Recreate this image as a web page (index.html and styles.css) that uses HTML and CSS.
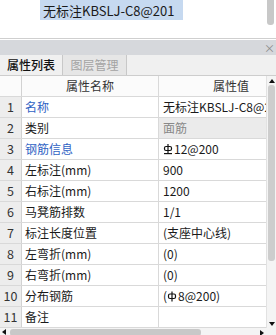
FILE: index.html
```html
<!DOCTYPE html>
<html>
<head>
<meta charset="utf-8">
<link rel="stylesheet" href="styles.css">
</head>
<body>
<div class="top">
  <div class="sel">无标注KBSLJ-C8@201</div>
  <div class="top-thumb"></div>
</div>
<div class="titlebar"><span class="close">×</span></div>
<div class="tabs">
  <div class="tab active">属性列表</div>
  <div class="tab">图层管理</div>
</div>
<div class="grid-wrap">
  <div class="grid">
    <div class="row head"><div class="num"></div><div class="name c">属性名称</div><div class="val c">属性值</div></div>
    <div class="row"><div class="num">1</div><div class="name blue">名称</div><div class="val">无标注KBSLJ-C8@201</div></div>
    <div class="row"><div class="num">2</div><div class="name">类别</div><div class="val ro">面筋</div></div>
    <div class="row"><div class="num">3</div><div class="name blue">钢筋信息</div><div class="val"><svg class="bar3" width="10" height="11" viewBox="0 0 10 11"><rect x="1.5" y="2.5" width="7" height="4" rx="1.5" fill="none" stroke="#111" stroke-width="1.2"/><line x1="5" y1="0" x2="5" y2="9" stroke="#111" stroke-width="1.2"/><line x1="1" y1="9.6" x2="9" y2="9.6" stroke="#111" stroke-width="1.2"/></svg>12@200</div></div>
    <div class="row"><div class="num">4</div><div class="name">左标注(mm)</div><div class="val">900</div></div>
    <div class="row"><div class="num">5</div><div class="name">右标注(mm)</div><div class="val">1200</div></div>
    <div class="row"><div class="num">6</div><div class="name">马凳筋排数</div><div class="val">1/1</div></div>
    <div class="row"><div class="num">7</div><div class="name">标注长度位置</div><div class="val">(支座中心线)</div></div>
    <div class="row"><div class="num">8</div><div class="name">左弯折(mm)</div><div class="val">(0)</div></div>
    <div class="row"><div class="num">9</div><div class="name">右弯折(mm)</div><div class="val">(0)</div></div>
    <div class="row"><div class="num">10</div><div class="name">分布钢筋</div><div class="val">(<svg class="bar1" width="10" height="11" viewBox="0 0 10 11"><rect x="1.5" y="3" width="7" height="4.5" rx="1.5" fill="none" stroke="#111" stroke-width="1.2"/><line x1="5" y1="0.5" x2="5" y2="10.5" stroke="#111" stroke-width="1.2"/></svg>8@200)</div></div>
    <div class="row"><div class="num">11</div><div class="name">备注</div><div class="val"></div></div>
  </div>
  <div class="vscroll">
    <span class="up"></span>
    <span class="vthumb"></span>
  </div>
</div>
<div class="hscroll">
  <span class="left"></span>
  <span class="hthumb"></span>
  <span class="right"></span>
  <span class="down"></span>
</div>
</body>
</html>
```

FILE: styles.css
```css
* { box-sizing: border-box; }
html, body {
  margin: 0;
  padding: 0;
}
body {
  width: 276px;
  height: 335px;
  overflow: hidden;
  background: #fff;
  font-family: "Noto Sans CJK SC", "Noto Sans", sans-serif;
  color: #1a1a1a;
}
.top {
  position: relative;
  height: 39px;
  border-bottom: 1px solid #cfcfcf;
}
.sel {
  margin-left: 40px;
  width: 143px;
  height: 20px;
  padding-left: 3px;
  background: #c6d9f0;
  font-size: 13px;
  line-height: 21px;
  white-space: nowrap;
  overflow: hidden;
}
.top-thumb {
  position: absolute;
  right: 2px;
  top: 0;
  width: 7px;
  height: 25px;
  background: #c8c8c8;
  border-radius: 0 0 3px 3px;
}
.titlebar {
  height: 16px;
  border-top: 1px solid #fff;
  background: #d6d8dc;
  display: flex;
  justify-content: flex-end;
  align-items: center;
  padding-right: 1px;
}
.close {
  font-size: 11px;
  line-height: 12px;
  color: #8a8a8a;
}
.tabs {
  height: 21px;
  display: flex;
  background: #f0f0f0;
  border-bottom: 1px solid #cdcdcd;
}
.tab {
  width: 64px;
  font-size: 12px;
  line-height: 20px;
  text-align: center;
  color: #a3a3a3;
  background: #e6e6e6;
  border-right: 1px solid #c8c8c8;
}
.tab.active {
  width: 63px;
  color: #111;
  background: #f0f0f0;
  font-weight: 500;
}
.grid-wrap {
  position: relative;
  height: 252px;
  overflow: hidden;
}
.grid {
  width: 303px;
}
.row {
  display: grid;
  grid-template-columns: 22px 137px 144px;
  height: 21px;
  border-bottom: 1px solid #d9d9d9;
  font-size: 12px;
  line-height: 20px;
}
.row > div {
  white-space: nowrap;
  overflow: hidden;
}
.num {
  background: #ededed;
  border-right: 1px solid #d2d2d2;
  text-align: center;
  color: #333;
  font-size: 12.5px;
}
.name {
  border-right: 1px solid #d9d9d9;
  padding-left: 3px;
}
.val {
  padding-left: 4px;
}
.c {
  text-align: center;
  padding-left: 0;
  color: #333;
}
.head {
  background: #fbfbfb;
}
.head .num {
  background: #fbfbfb;
}
.blue { color: #2f63c4; }
.ro {
  background: #ebebeb;
  color: #888;
}
.bar3, .bar1 {
  vertical-align: -1px;
  margin-right: 1px;
}
.vscroll {
  position: absolute;
  right: 0;
  top: 0;
  bottom: 0;
  width: 10px;
  background: #f4f4f4;
  border-left: 1px solid #e2e2e2;
}
.up {
  position: absolute;
  left: 2px;
  top: 3px;
  width: 0;
  height: 0;
  border-left: 3px solid transparent;
  border-right: 3px solid transparent;
  border-bottom: 4px solid #111;
}
.vthumb {
  position: absolute;
  left: 1px;
  top: 9px;
  width: 7px;
  height: 176px;
  background: #cdcdcd;
  border-radius: 3px;
}
.hscroll {
  position: relative;
  height: 7px;
  background: #f4f4f4;
}
.left {
  position: absolute;
  left: 2px;
  top: 1px;
  width: 0;
  height: 0;
  border-top: 3px solid transparent;
  border-bottom: 3px solid transparent;
  border-right: 4px solid #111;
}
.hthumb {
  position: absolute;
  left: 10px;
  top: 1px;
  width: 191px;
  height: 7px;
  background: #c8c8c8;
  border-radius: 3px;
}
.right {
  position: absolute;
  left: 260px;
  top: 2px;
  width: 0;
  height: 0;
  border-top: 3px solid transparent;
  border-bottom: 3px solid transparent;
  border-left: 4px solid #111;
}
.down {
  position: absolute;
  right: 1px;
  top: -6px;
  width: 0;
  height: 0;
  border-left: 3px solid transparent;
  border-right: 3px solid transparent;
  border-top: 4px solid #111;
}
```
